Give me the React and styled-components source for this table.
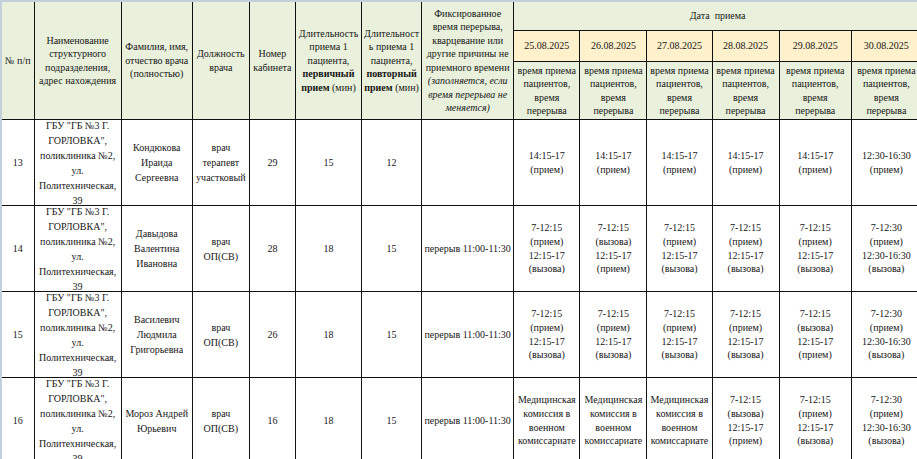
import React from 'react';
import styled, { createGlobalStyle } from 'styled-components';

const GlobalStyle = createGlobalStyle`
  html, body {
    margin: 0;
    padding: 0;
    overflow: hidden;
    background: #c2d0dd;
  }
  body {
    font-family: "Liberation Serif", "Times New Roman", serif;
    color: #141414;
  }
`;

const serif = `"Liberation Serif", "Times New Roman", "DejaVu Serif", serif`;

const Frame = styled.div`
  padding: 2px 0 0 2px;
  width: 960px;
`;

const Sheet = styled.table`
  border-collapse: collapse;
  table-layout: fixed;
  width: 920px;
  background: #fff;
  font-family: ${serif};
  color: #161616;
`;

const Col = styled.col`
  width: ${p => p.$w}px;
`;

const HeadCell = styled.th`
  padding: 0 2px;
  font-family: ${serif};
  font-weight: normal;
  font-size: 10px;
  line-height: 13.5px;
  text-align: center;
  vertical-align: middle;
  background: ${p => (p.$yellow ? '#fff1cb' : '#e9f0dc')};
  border: 1px solid #111;
  border-top: ${p => (p.$top ? 'none' : '1px solid #111')};
  border-left: ${p => (p.$first ? 'none' : '1px solid #111')};
`;

const BodyCell = styled.td`
  padding: 0 2px;
  font-family: ${serif};
  font-size: 10px;
  text-align: center;
  vertical-align: middle;
  border: 1px solid #111;
  border-left: ${p => (p.$first ? 'none' : '1px solid #111')};
`;

const Box = styled.div`
  height: ${p => p.$h}px;
  line-height: ${p => p.$lh || 13.5}px;
  display: flex;
  flex-direction: column;
  justify-content: center;
  align-items: center;
  overflow: hidden;
  white-space: ${p => (p.$nowrap ? 'nowrap' : 'normal')};
`;

const Line = styled.span`
  display: block;
  white-space: nowrap;
  font-weight: ${p => (p.$bold ? 'bold' : 'normal')};
  font-style: ${p => (p.$italic ? 'italic' : 'normal')};
`;

const Bold = styled.b`
  font-weight: bold;
`;

const widths = [32, 87, 71, 57, 46, 66, 60, 92, 66, 67, 65, 67, 72, 70];
const dates = ['25.08.2025', '26.08.2025', '27.08.2025', '28.08.2025', '29.08.2025', '30.08.2025'];

const address = ['ГБУ "ГБ №3 Г.', 'ГОРЛОВКА",', 'поликлиника №2,', 'ул.', 'Политехническая,', '39'];

const PV = ['7-12:15', '(прием)', '12:15-17', '(вызова)'];
const VP = ['7-12:15', '(вызова)', '12:15-17', '(прием)'];
const LATE = ['7-12:30', '(прием)', '12:30-16:30', '(вызова)'];
const AFTERNOON = ['14:15-17', '(прием)'];
const COMMISSION = ['Медицинская', 'комиссия в', 'военном', 'комиссариате'];

const rows = [
  {
    n: 13,
    name: ['Кондюкова', 'Ираида', 'Сергеевна'],
    post: ['врач', 'терапевт', 'участковый'],
    room: 29,
    first: 15,
    repeat: 12,
    pause: '',
    days: [AFTERNOON, AFTERNOON, AFTERNOON, AFTERNOON, AFTERNOON, ['12:30-16:30', '(прием)']],
  },
  {
    n: 14,
    name: ['Давыдова', 'Валентина', 'Ивановна'],
    post: ['врач', 'ОП(СВ)'],
    room: 28,
    first: 18,
    repeat: 15,
    pause: 'перерыв 11:00-11:30',
    days: [PV, VP, PV, PV, PV, LATE],
  },
  {
    n: 15,
    name: ['Василевич', 'Людмила', 'Григорьевна'],
    post: ['врач', 'ОП(СВ)'],
    room: 26,
    first: 18,
    repeat: 15,
    pause: 'перерыв 11:00-11:30',
    days: [PV, PV, PV, PV, VP, LATE],
  },
  {
    n: 16,
    name: ['Мороз Андрей', 'Юрьевич'],
    post: ['врач', 'ОП(СВ)'],
    room: 16,
    first: 18,
    repeat: 15,
    pause: 'перерыв 11:00-11:30',
    days: [COMMISSION, COMMISSION, COMMISSION, VP, PV, LATE],
  },
];

const Lines = ({ items }) => items.map((t, i) => <Line key={i}>{t}</Line>);

const Header = () => (
  <thead>
    <tr>
      <HeadCell rowSpan={3} $top $first>№ п/п</HeadCell>
      <HeadCell rowSpan={3} $top>
        <Lines items={['Наименование', 'структурного', 'подразделения,', 'адрес нахождения']} />
      </HeadCell>
      <HeadCell rowSpan={3} $top>
        <Lines items={['Фамилия, имя,', 'отчество врача', '(полностью)']} />
      </HeadCell>
      <HeadCell rowSpan={3} $top>
        <Lines items={['Должность', 'врача']} />
      </HeadCell>
      <HeadCell rowSpan={3} $top>
        <Lines items={['Номер', 'кабинета']} />
      </HeadCell>
      <HeadCell rowSpan={3} $top>
        <Line>Длительность</Line>
        <Line>приема 1</Line>
        <Line>пациента,</Line>
        <Line $bold>первичный</Line>
        <Line><Bold>прием</Bold> (мин)</Line>
      </HeadCell>
      <HeadCell rowSpan={3} $top>
        <Line>Длительност</Line>
        <Line>ь приема 1</Line>
        <Line>пациента,</Line>
        <Line $bold>повторный</Line>
        <Line><Bold>прием</Bold> (мин)</Line>
      </HeadCell>
      <HeadCell rowSpan={3} $top>
        <Lines items={['Фиксированное', 'время перерыва,', 'кварцевание или', 'другие причины не', 'приемного времени']} />
        <Line $italic>(заполняется, если</Line>
        <Line $italic>время перерыва не</Line>
        <Line $italic>меняется)</Line>
      </HeadCell>
      <HeadCell colSpan={6} $top>
        <Box $h={28}>Дата&nbsp;&nbsp;приема</Box>
      </HeadCell>
    </tr>
    <tr>
      {dates.map(d => (
        <HeadCell key={d} $yellow>
          <Box $h={30}>{d}</Box>
        </HeadCell>
      ))}
    </tr>
    <tr>
      {dates.map(d => (
        <HeadCell key={d}>
          <Box $h={57}>
            <Lines items={['время приема', 'пациентов,', 'время', 'перерыва']} />
          </Box>
        </HeadCell>
      ))}
    </tr>
  </thead>
);

const DoctorRow = ({ row }) => (
  <tr>
    <BodyCell $first><Box $h={85}>{row.n}</Box></BodyCell>
    <BodyCell><Box $h={85} $lh={15}><Lines items={address} /></Box></BodyCell>
    <BodyCell><Box $h={85} $lh={15}><Lines items={row.name} /></Box></BodyCell>
    <BodyCell><Box $h={85} $lh={15}><Lines items={row.post} /></Box></BodyCell>
    <BodyCell><Box $h={85}>{row.room}</Box></BodyCell>
    <BodyCell><Box $h={85}>{row.first}</Box></BodyCell>
    <BodyCell><Box $h={85}>{row.repeat}</Box></BodyCell>
    <BodyCell><Box $h={85} $nowrap>{row.pause}</Box></BodyCell>
    {row.days.map((d, i) => (
      <BodyCell key={i}>
        <Box $h={85} $lh={13.7}><Lines items={d} /></Box>
      </BodyCell>
    ))}
  </tr>
);

export default function App() {
  return (
    <>
      <GlobalStyle />
      <Frame>
        <Sheet>
          <colgroup>
            {widths.map((w, i) => <Col key={i} $w={w} />)}
          </colgroup>
          <Header />
          <tbody>
            {rows.map(r => <DoctorRow key={r.n} row={r} />)}
          </tbody>
        </Sheet>
      </Frame>
    </>
  );
}
